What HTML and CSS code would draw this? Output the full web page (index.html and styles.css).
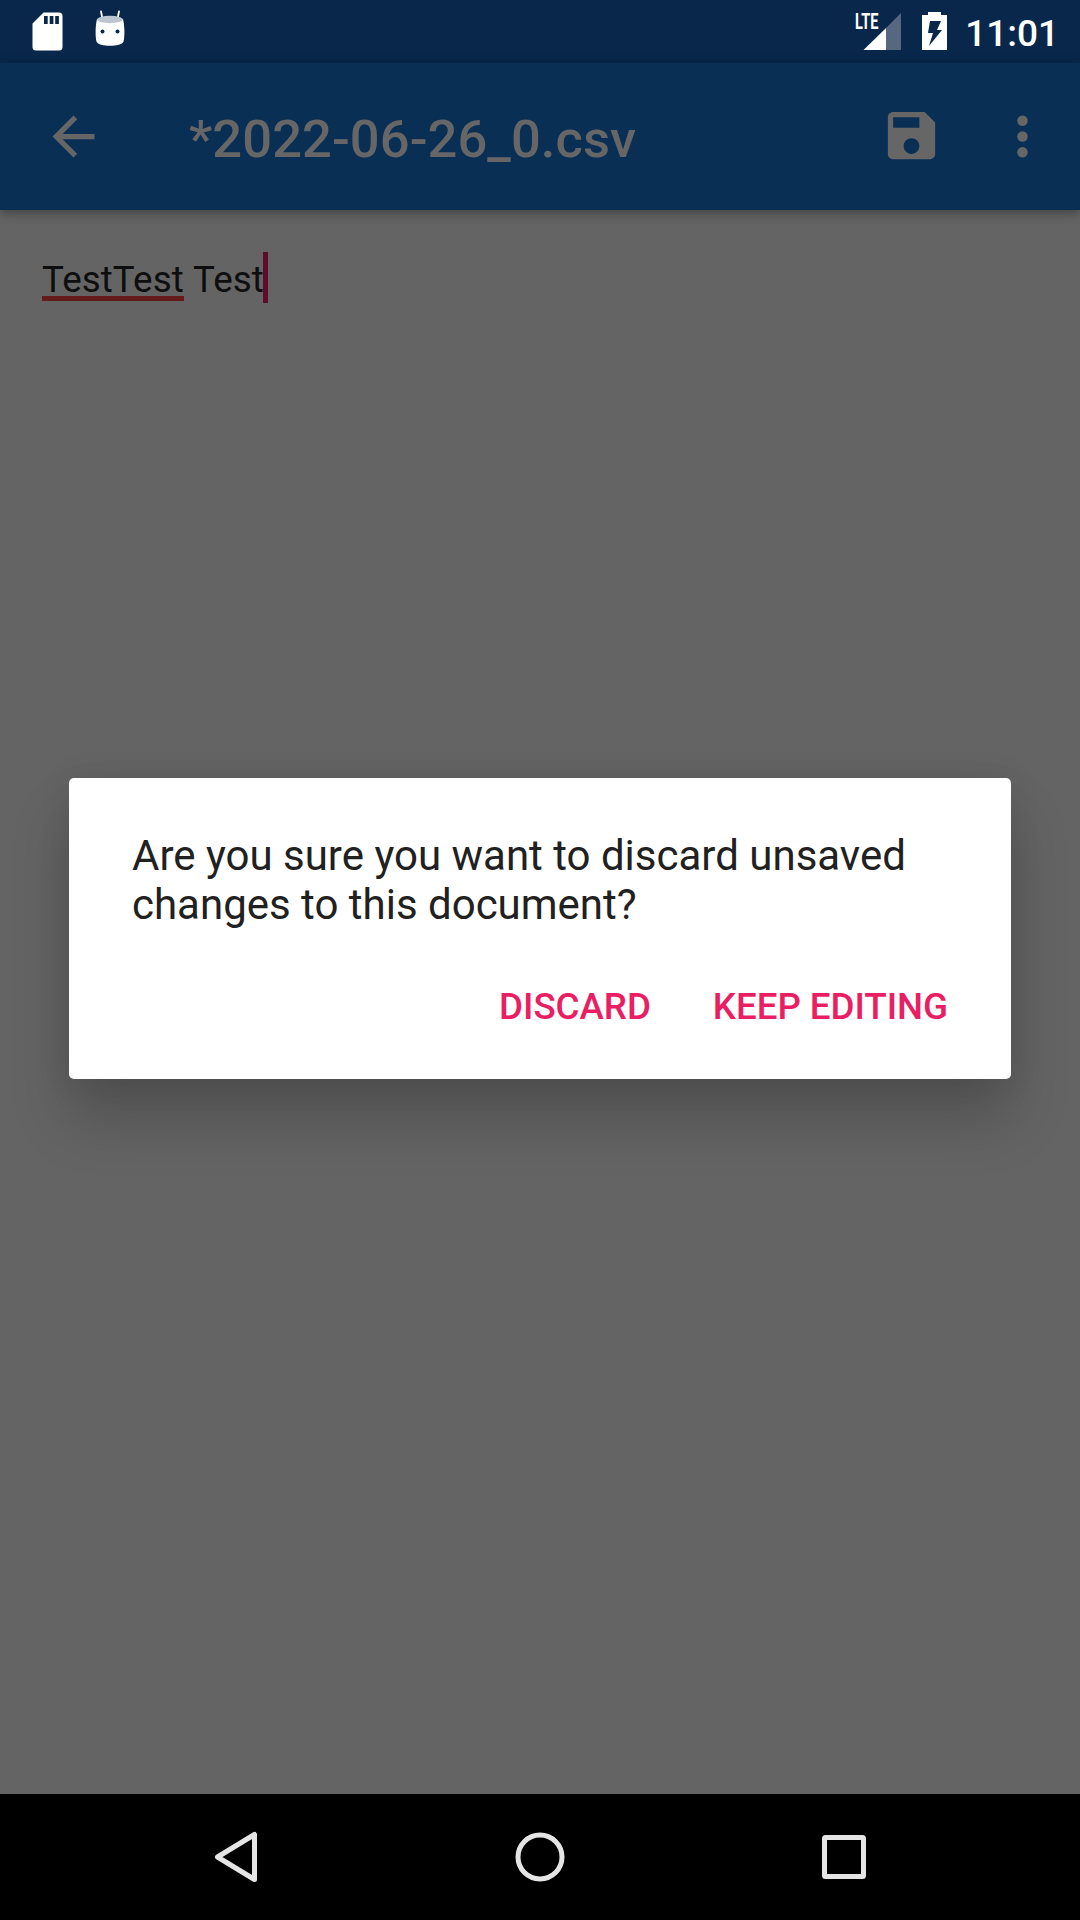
FILE: index.html
```html
<!DOCTYPE html>
<html lang="en">
<head>
<meta charset="utf-8">
<title>*2022-06-26_0.csv</title>
<link rel="stylesheet" href="styles.css">
</head>
<body>
<div class="screen">
  <header class="status-bar">
    <div class="status-left">
      <svg width="31" height="39" viewBox="0 0 31 39"><path fill="#fff" fill-rule="evenodd" d="M11.5.5H27a3.500 3.500 0 0 1 3.500 3.500V35a3.500 3.500 0 0 1-3.500 3.500H4A3.500 3.500 0 0 1 .5 35V11.500zM12 4v8h3.700V4zm5.700 0v8h3.700V4zm5.500 0v8h3.700V4z"/></svg>
      <svg class="droid" width="32" height="38" viewBox="0 0 32 38">
        <path d="M8.500 9 7 1.500M23.500 9 25 1.500" stroke="#fff" stroke-width="1.800" stroke-linecap="round"/>
        <path fill="#fff" d="M3 9h26c1.500 6 2 17 .5 22.500C27.500 37.300 4.500 37.300 2.500 31.500 1 26 1.500 15 3 9z"/>
        <ellipse cx="16" cy="9.500" rx="13" ry="3.700" fill="#bdc6d0"/>
        <circle cx="8.500" cy="21.500" r="2" fill="#09274b"/><circle cx="23.500" cy="21.500" r="2" fill="#09274b"/>
      </svg>
    </div>
    <div class="status-right">
      <div class="signal">
        <svg width="46" height="38" viewBox="0 0 46 38"><path d="M46 0v37H31V15z" fill="#56687f"/><path d="M31 15v22H8.500z" fill="#fff"/></svg>
        <span class="lte">LTE</span>
      </div>
      <svg class="battery" width="25" height="38" viewBox="0 0 25 38"><path fill="#fff" fill-rule="evenodd" d="M6 0h13v3h6v35H0V3h6zM8 9 6 21h5L7 34l13-16h-5l4-9z"/></svg>
      <span class="clock">11:01</span>
    </div>
  </header>

  <nav class="toolbar">
    <svg class="icon back" viewBox="0 0 24 24"><path d="M20 11H7.830l5.590-5.590L12 4l-8 8 8 8 1.410-1.410L7.830 13H20v-2z"/></svg>
    <h1 class="title">*2022-06-26_0.csv</h1>
    <svg class="icon save" viewBox="0 0 24 24"><path d="M17 3H5c-1.110 0-2 .9-2 2v14c0 1.100.89 2 2 2h14c1.100 0 2-.9 2-2V7l-4-4zm-5 16c-1.660 0-3-1.340-3-3s1.340-3 3-3 3 1.340 3 3-1.340 3-3 3zm3-10H5V5h10v4z"/></svg>
    <svg class="icon more" viewBox="0 0 24 24"><circle cx="12" cy="6" r="2"/><circle cx="12" cy="12" r="2"/><circle cx="12" cy="18" r="2"/></svg>
  </nav>

  <main class="editor"><span class="misspelled">TestTest</span><span class="word">&nbsp;Test</span><span class="caret"></span></main>

  <footer class="nav-bar">
    <svg width="44" height="52" viewBox="0 0 44 52"><path d="M40.500 3.500v45L3.500 26z" class="nav-line"/></svg>
    <svg class="home" width="50" height="50" viewBox="0 0 50 50"><circle cx="25" cy="25" r="22" class="nav-line"/></svg>
    <svg class="recents" width="44" height="44" viewBox="0 0 44 44"><rect x="2.500" y="2.500" width="39" height="39" rx="1" class="nav-line"/></svg>
  </footer>

  <div class="overlay">
    <section class="dialog" role="alertdialog">
      <p class="message">Are you sure you want to discard unsaved changes to this document?</p>
      <div class="actions"><button class="action">DISCARD</button><button class="action">KEEP EDITING</button></div>
    </section>
  </div>
</div>
</body>
</html>
```
FILE: styles.css
```css
* { box-sizing: border-box; margin: 0; }
body { font-family: Roboto, "Noto Sans", sans-serif; }
svg { display: block; flex: none; }
.screen {
  position: relative;
  width: 1080px;
  height: 1920px;
  overflow: hidden;
  display: flex;
  flex-direction: column;
  background: #646464;
}
.status-bar {
  height: 63px;
  flex: none;
  display: flex;
  justify-content: space-between;
  padding: 12px 21px 0 32px;
  background: #09274b;
}
.status-left, .status-right { display: flex; align-items: flex-start; }
.droid { margin: -2px 0 0 31px; }
.battery { margin-left: 21px; }
.signal { position: relative; margin-top: 1px; }
.lte {
  position: absolute;
  left: 0;
  top: -4px;
  font-size: 22px;
  line-height: 26px;
  font-weight: 700;
  color: #fff;
  transform: scaleX(.66);
  transform-origin: left;
}
.clock {
  margin-left: 18px;
  font-size: 37px;
  line-height: 43px;
  font-weight: 500;
  color: #fff;
}
.toolbar {
  height: 147px;
  flex: none;
  display: flex;
  align-items: center;
  padding: 0 26px 0 42px;
  background: #0a2f54;
  box-shadow: 0 3px 10px rgba(0, 0, 0, .35);
}
.icon { width: 63px; height: 63px; fill: #666; }
.title {
  flex: 1;
  margin-left: 84px;
  padding-top: 5px;
  font-size: 52.5px;
  line-height: 62px;
  font-weight: 500;
  letter-spacing: .06px;
  color: #666;
}
.save { margin-top: -2px; }
.more { margin-left: 48px; }
.editor {
  flex: 1;
  display: flex;
  align-items: flex-start;
  padding: 42px;
  font-size: 36.75px;
  line-height: 56px;
  letter-spacing: .06px;
  color: #0e0e0e;
}
.misspelled {
  height: 49px;
  border-bottom: 5px solid #651b1b;
}
.caret { width: 5px; height: 51px; margin-left: -1px; background: #5f0c2b; }
.nav-bar {
  height: 126px;
  flex: none;
  display: flex;
  align-items: center;
  padding-left: 214px;
  background: #000;
}
.nav-line { fill: none; stroke: #e5e5e5; stroke-width: 5; stroke-linejoin: round; }
.home { margin-left: 257px; }
.recents { margin-left: 257px; }
.overlay {
  position: absolute;
  inset: 63px 0 126px;
  display: flex;
  align-items: center;
  justify-content: center;
}
.dialog {
  width: 942px;
  height: 301px;
  padding: 53px 42px 0 63px;
  border-radius: 5px;
  background: #fff;
  box-shadow: 0 40px 60px rgba(0, 0, 0, .2), 0 0 32px rgba(0, 0, 0, .09);
}
.message { font-size: 42px; line-height: 49px; color: #212121; }
.actions {
  display: flex;
  justify-content: flex-end;
  gap: 20px;
  margin-top: 56px;
}
.action {
  border: 0;
  padding: 0 21px;
  background: none;
  font: 500 36.75px/43px Roboto, "Noto Sans", sans-serif;
  letter-spacing: -.06px;
  color: #e91e63;
}
```
